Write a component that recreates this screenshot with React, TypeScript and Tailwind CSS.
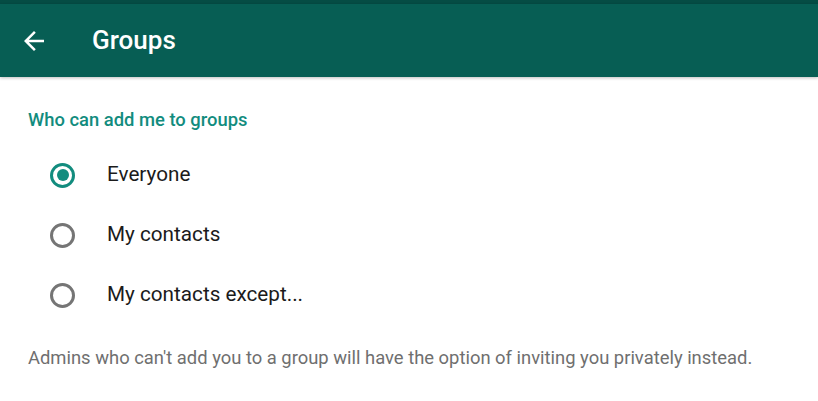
import React, { useState } from 'react';

const options = ['Everyone', 'My contacts', 'My contacts except...'];

const Radio: React.FC<{ checked: boolean }> = ({ checked }) => (
  <span
    className={`w-[25px] h-[25px] rounded-full border-[3px] flex items-center justify-center ${
      checked ? 'border-[#128c7e]' : 'border-[#757575]'
    }`}
  >
    {checked && <span className="w-[12px] h-[12px] rounded-full bg-[#128c7e]" />}
  </span>
);

const App: React.FC = () => {
  const [selected, setSelected] = useState(0);

  return (
    <div className="w-[818px] h-[401px] bg-white overflow-hidden font-['Roboto',sans-serif]">
      <div className="h-[4px] bg-[#054c44]" />
      <header className="h-[73px] bg-[#075e54] flex items-center shadow-[0_1px_3px_rgba(0,0,0,0.25)] relative">
        <svg width="30" height="30" viewBox="0 0 24 24" className="ml-[19px] text-white">
          <path
            d="M20 11H7.83l5.59-5.59L12 4l-8 8 8 8 1.41-1.41L7.83 13H20v-2z"
            fill="currentColor"
          />
        </svg>
        <h1 className="ml-[43px] text-white text-[26px] font-medium">Groups</h1>
      </header>

      <div className="pt-[30px]">
        <h2 className="px-[28px] text-[#128c7e] text-[18.4px] font-medium leading-[26px]">
          Who can add me to groups
        </h2>

        <div className="mt-[12px]">
          {options.map((label, i) => (
            <button
              key={label}
              className="w-full h-[60px] flex items-center text-left"
              onClick={() => setSelected(i)}
            >
              <span className="ml-[50px]">
                <Radio checked={selected === i} />
              </span>
              <span className="ml-[32px] text-[20.7px] text-[#1b1b1b]">{label}</span>
            </button>
          ))}
        </div>

        <p className="mt-[21px] px-[28px] text-[18.4px] text-[#6f6f6f] leading-[24px] whitespace-nowrap">
          Admins who can't add you to a group will have the option of inviting you privately instead.
        </p>
      </div>
    </div>
  );
};

export default App;
